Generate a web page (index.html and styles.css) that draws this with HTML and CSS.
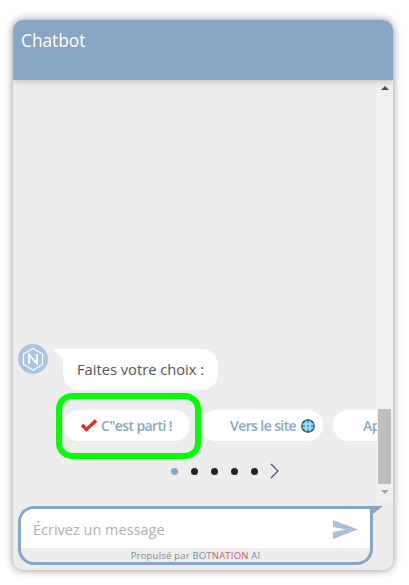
FILE: index.html
```html
<!DOCTYPE html>
<html>
    <head>
        <title>Chatbot</title>
        <link rel="stylesheet" href="styles.css">
    </head>
    <body>
        <div class="widget">
            <div class="header">Chatbot</div>
            <div class="body">
                <div class="messages">
                    <div class="message">
                        <svg class="avatar" viewBox="0 0 30 30">
                            <circle cx="15" cy="15" r="15" fill="#a9c5e0"/>
                            <path d="M15 4.500 24.500 10v10.500L15 26l-9.500-5.500V10z" fill="none" stroke="#fff" stroke-width="1.300"/>
                            <path d="M11 20V10.500L19 19.500V10" fill="none" stroke="#fff" stroke-width="1.800"/>
                        </svg>
                        <div class="tip"></div>
                        <div class="bubble">Faites votre choix :</div>
                    </div>
                    <div class="choices">
                        <div class="choice first">
                            <svg class="check" viewBox="0 0 16 13"><path d="M1 6 5.500 10.500 15 1.500" fill="none" stroke="#e2301c" stroke-width="3.400"/></svg>
                            C"est parti !
                        </div>
                        <div class="choice second">
                            Vers le site
                            <svg class="globe" viewBox="0 0 14 14">
                                <circle cx="7" cy="7" r="6.200" fill="#3fb4ec" stroke="#2c3440" stroke-width="1.200"/>
                                <path d="M5 1.500v11M9 1.500v11M1.500 5h11M1.500 9h11" stroke="#d8f1fc" stroke-width="1"/>
                            </svg>
                        </div>
                        <div class="choice third">Ap</div>
                    </div>
                    <div class="dots">
                        <span class="dot active"></span>
                        <span class="dot"></span>
                        <span class="dot"></span>
                        <span class="dot"></span>
                        <span class="dot"></span>
                        <svg class="next" viewBox="0 0 9 16"><path d="M1 1l7 7-7 7" fill="none" stroke="#3f4f66" stroke-width="1.200"/></svg>
                    </div>
                    <div class="highlight"></div>
                </div>
                <div class="scrollbar">
                    <div class="arrow up"></div>
                    <div class="track"><div class="thumb"></div></div>
                    <div class="arrow down"></div>
                </div>
            </div>
            <div class="composer">
                <div class="tail"></div>
                <div class="input-row">
                    <div class="placeholder">Écrivez un message</div>
                    <svg class="send" viewBox="0 0 25 19"><path d="M0 0 25 9.500 0 19V12L13 9.500 0 7z" fill="#a9c0da"/></svg>
                </div>
                <div class="powered">Propulsé par <span class="blue">BOT</span><span class="red">NATION</span> <span class="blue">AI</span></div>
            </div>
        </div>
    </body>
</html>
```

FILE: styles.css
```css
html, body {
    height: 100%;
}
body {
    margin: 0;
    padding: 20px 16px 15px 13px;
    box-sizing: border-box;
    background: #fff;
    font-family: "Open Sans", sans-serif;
    overflow: hidden;
}
.widget {
    height: 550px;
    display: flex;
    flex-direction: column;
    background: #ededed;
    border-radius: 10px;
    box-shadow: 0 0 8px rgba(0, 0, 0, .45);
    overflow: hidden;
}
.header {
    height: 60px;
    flex: none;
    box-sizing: border-box;
    padding: 9px 8px;
    background: #88a6c3;
    color: #fff;
    font-size: 17.300px;
    line-height: 24px;
    box-shadow: 0 2px 6px rgba(0, 0, 0, .18);
    z-index: 1;
}
.body {
    height: 420px;
    flex: none;
    display: flex;
}
.messages {
    position: relative;
    width: 364px;
    flex: none;
    display: flex;
    flex-direction: column;
    justify-content: flex-end;
    overflow: hidden;
    padding-bottom: 21px;
    box-sizing: border-box;
}
.message {
    display: flex;
    align-items: flex-start;
    padding-left: 5px;
}
.avatar {
    width: 30px;
    height: 30px;
    flex: none;
    margin-top: -5px;
}
.tip {
    width: 0;
    height: 0;
    margin-left: 5px;
    border-top: 10px solid #fff;
    border-left: 10px solid transparent;
}
.bubble {
    height: 41px;
    padding: 0 14px;
    background: #fff;
    border-radius: 0 16px 16px 16px;
    color: #555;
    font-size: 14.700px;
    line-height: 41px;
}
.choices {
    display: flex;
    gap: 10px;
    margin-top: 20px;
    padding-left: 50px;
}
.choice {
    flex: none;
    height: 31px;
    display: flex;
    align-items: center;
    gap: 5px;
    background: #fff;
    border-radius: 16px;
    color: #8aa8c9;
    font-size: 14px;
    font-weight: 600;
    letter-spacing: -.6px;
    white-space: nowrap;
}
.first {
    padding: 0 18px;
}
.second {
    padding: 0 8px 0 30px;
}
.third {
    padding: 0 30px;
}
.check {
    width: 16px;
    height: 13px;
    margin-right: -1px;
}
.globe {
    width: 14px;
    height: 14px;
}
.dots {
    display: flex;
    align-items: center;
    gap: 13px;
    height: 16px;
    margin-top: 22px;
    padding-left: 158px;
}
.dot {
    width: 7px;
    height: 7px;
    border-radius: 50%;
    background: #1e2430;
}
.dot.active {
    background: #88a6c3;
}
.next {
    width: 9px;
    height: 16px;
    margin-left: -1px;
}
.highlight {
    position: absolute;
    left: 43px;
    top: 313px;
    width: 133px;
    height: 54px;
    border: 6px solid #00ff00;
    border-radius: 16px;
}
.scrollbar {
    width: 16px;
    flex: none;
    display: flex;
    flex-direction: column;
    background: #f0f0f0;
}
.arrow {
    height: 16px;
    flex: none;
    display: flex;
    justify-content: center;
    align-items: center;
}
.arrow.up::before {
    content: "";
    border: 4px solid transparent;
    border-top: 0;
    border-bottom: 4px solid #4a4553;
}
.arrow.down::before {
    content: "";
    border: 4px solid transparent;
    border-bottom: 0;
    border-top: 4px solid #a3a3a3;
}
.track {
    flex: 1;
    display: flex;
    flex-direction: column;
    justify-content: flex-end;
    padding-left: 1px;
}
.thumb {
    width: 13px;
    height: 75px;
    background: #bdbdbd;
}
.composer {
    position: relative;
    margin: 6px 20px 0 5px;
    height: 59px;
    box-sizing: border-box;
    border: 3px solid #88a6c3;
    border-radius: 16px 0 16px 16px;
    display: flex;
    flex-direction: column;
}
.tail {
    position: absolute;
    right: -13px;
    top: -3px;
    width: 0;
    height: 0;
    border-top: 8px solid #88a6c3;
    border-right: 10px solid transparent;
}
.input-row {
    height: 39px;
    flex: none;
    display: flex;
    align-items: center;
    justify-content: space-between;
    padding: 1px 12px 0 12px;
    box-sizing: border-box;
    background: #fff;
    border-radius: 13px 0 0 0;
}
.placeholder {
    color: #b0b0b0;
    font-size: 14.500px;
}
.send {
    width: 25px;
    height: 19px;
}
.powered {
    flex: 1;
    text-align: center;
    color: #888;
    font-size: 9.500px;
    line-height: 15px;
    letter-spacing: .2px;
}
.blue {
    color: #6f8fb5;
}
.red {
    color: #c0605f;
}
```
